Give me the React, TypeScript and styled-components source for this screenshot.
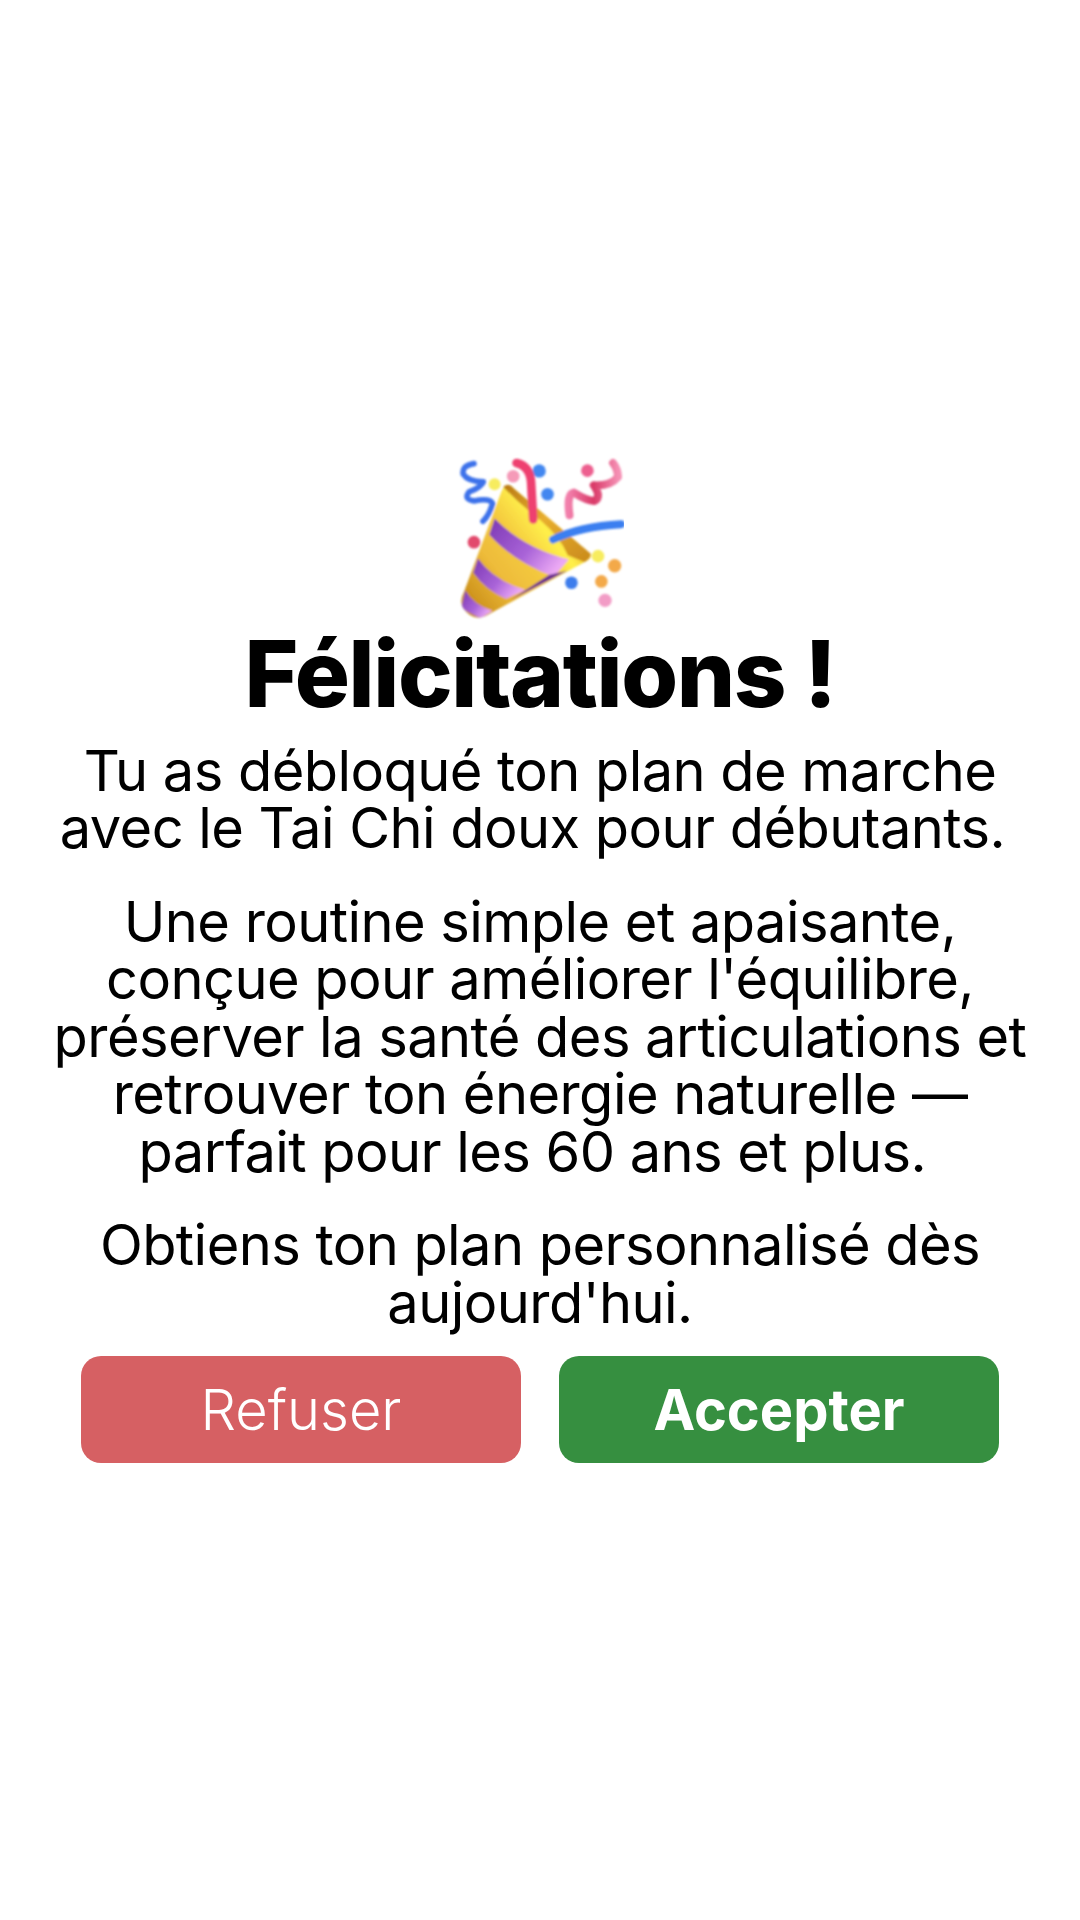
import styled, { createGlobalStyle } from "styled-components";

const GlobalStyle = createGlobalStyle`
  html, body {
    margin: 0;
    padding: 0;
    background: #fff;
  }
`;

const CONE_PATH =
  "M212 155 Q222 128 245 140 L480 340 Q486 352 470 362 L165 528 Q125 545 98 505 Q85 485 100 455 Z";

const PartyPopper = () => (
  <EmojiSvg viewBox="80 50 500 490" aria-hidden="true">
    <defs>
      <linearGradient id="cone" x1="0.1" y1="0.95" x2="0.85" y2="0.35">
        <stop offset="0" stopColor="#c98d18" />
        <stop offset="0.35" stopColor="#eebc3a" />
        <stop offset="0.6" stopColor="#f4c93f" />
        <stop offset="0.85" stopColor="#fff04a" />
        <stop offset="1" stopColor="#f0c030" />
      </linearGradient>
      <linearGradient id="mouth" x1="0" y1="0" x2="1" y2="1">
        <stop offset="0" stopColor="#b97a14" />
        <stop offset="0.45" stopColor="#e8ae2e" />
        <stop offset="1" stopColor="#c98a1c" />
      </linearGradient>
      <linearGradient id="stripe" x1="0" y1="0" x2="1" y2="0.6">
        <stop offset="0" stopColor="#7c38b4" />
        <stop offset="0.6" stopColor="#a964d8" />
        <stop offset="1" stopColor="#eba8f4" />
      </linearGradient>
      <linearGradient id="ribbon" x1="0" y1="0" x2="1" y2="0">
        <stop offset="0" stopColor="#f27fab" />
        <stop offset="0.5" stopColor="#d93a68" />
        <stop offset="1" stopColor="#f590b4" />
      </linearGradient>
      <clipPath id="coneClip">
        <path d={CONE_PATH} />
      </clipPath>
      <filter id="soft" x="-10%" y="-10%" width="120%" height="120%">
        <feGaussianBlur stdDeviation="3.5" />
      </filter>
    </defs>
    <g filter="url(#soft)">
      <path
        d="M130 70 Q92 76 98 102 Q112 124 158 125 Q150 142 115 155 Q98 178 130 182 Q178 172 186 190 Q176 225 157 243"
        fill="none"
        stroke="#3d72ea"
        strokeWidth="17"
        strokeLinecap="round"
        strokeLinejoin="round"
      />
      <path
        d="M417 225 Q408 160 430 157 Q470 182 492 182 Q515 170 490 135 Q540 138 563 110 Q562 85 548 68"
        fill="none"
        stroke="url(#ribbon)"
        strokeWidth="24"
        strokeLinecap="round"
        strokeLinejoin="round"
      />
      <circle cx="192" cy="132" r="18" fill="#f7ec5e" />
      <circle cx="248" cy="108" r="19" fill="#f59ab8" />
      <circle cx="326" cy="92" r="20" fill="#4287f0" />
      <circle cx="351" cy="162" r="19" fill="#4287f0" />
      <circle cx="471" cy="91" r="19" fill="#ed5f8f" />
      <circle cx="130" cy="306" r="19" fill="#e24a6c" />
      <circle cx="503" cy="348" r="19" fill="#f7ec5e" />
      <circle cx="553" cy="377" r="20" fill="#f3a94a" />
      <circle cx="513" cy="424" r="19" fill="#f3a94a" />
      <circle cx="423" cy="428" r="19" fill="#3d7dec" />
      <circle cx="524" cy="481" r="20" fill="#f29cc6" />
      <path d={CONE_PATH} fill="url(#cone)" />
      <path
        d="M218 140 Q235 125 250 145 L480 340 Q482 355 462 366 L412 345 Q390 290 330 240 Q265 190 218 140 Z"
        fill="url(#mouth)"
      />
      <g clipPath="url(#coneClip)">
        <path d="M192 235 Q280 325 415 358 L370 410 Q250 365 176 284 Z" fill="url(#stripe)" />
        <path d="M142 355 Q190 422 285 450 L226 476 Q165 450 128 398 Z" fill="url(#stripe)" />
        <path d="M104 452 Q130 496 185 512 L150 535 L92 505 Z" fill="url(#stripe)" />
        <path d="M355 405 L410 392 L240 480 Z" fill="#6a2a90" />
      </g>
      <path
        d="M258 68 Q300 78 302 130 L308 238"
        fill="none"
        stroke="#ee4070"
        strokeWidth="26"
        strokeLinecap="round"
      />
      <path
        d="M368 298 Q450 258 572 252"
        fill="none"
        stroke="#3b7ff0"
        strokeWidth="24"
        strokeLinecap="round"
      />
    </g>
  </EmojiSvg>
);

export default function App() {
  return (
    <Page>
      <GlobalStyle />
      <PartyPopper />
      <Title>Félicitations !</Title>
      <Paragraph>
        Tu as débloqué ton plan de marche
        <br />
        avec le Tai Chi doux pour débutants.{"\u00a0"}
      </Paragraph>
      <Paragraph>
        Une routine simple et apaisante,
        <br />
        conçue pour améliorer l'équilibre,
        <br />
        préserver la santé des articulations et
        <br />
        retrouver ton énergie naturelle —
        <br />
        parfait pour les 60 ans et plus.{"\u00a0"}
      </Paragraph>
      <Paragraph>
        Obtiens ton plan personnalisé dès
        <br />
        aujourd'hui.
      </Paragraph>
      <Actions>
        <ActionButton $bg="#d66063" $weight={300}>
          Refuser
        </ActionButton>
        <ActionButton $bg="#368f40" $weight={700}>
          Accepter
        </ActionButton>
      </Actions>
    </Page>
  );
}

const Page = styled.div`
  box-sizing: border-box;
  min-height: 100vh;
  display: flex;
  flex-direction: column;
  align-items: center;
  justify-content: center;
  background: #fff;
  color: #000;
  font-family: Inter, "Liberation Sans", sans-serif;
`;

const EmojiSvg = styled.svg`
  display: block;
  width: 167px;
  height: 163px;
`;

const Title = styled.h1`
  margin: 3px 0 0;
  font-size: 92px;
  font-weight: 800;
  line-height: 102px;
  letter-spacing: -1.4px;
  text-align: center;
  white-space: nowrap;
`;

const Paragraph = styled.p`
  margin: 36px 0 0;
  font-size: 56px;
  font-weight: 400;
  line-height: 57.5px;
  letter-spacing: -0.56px;
  text-align: center;
  white-space: nowrap;

  ${Title} + & {
    margin-top: 18px;
  }
`;

const Actions = styled.div`
  display: grid;
  grid-template-columns: 440px 440px;
  column-gap: 38px;
  margin-top: 24px;
`;

const ActionButton = styled.button<{ $bg: string; $weight: number }>`
  height: 107px;
  border: none;
  border-radius: 20px;
  background: ${(p) => p.$bg};
  color: #fff;
  font-family: inherit;
  font-size: 56px;
  font-weight: ${(p) => p.$weight};
  padding: 0;
`;
